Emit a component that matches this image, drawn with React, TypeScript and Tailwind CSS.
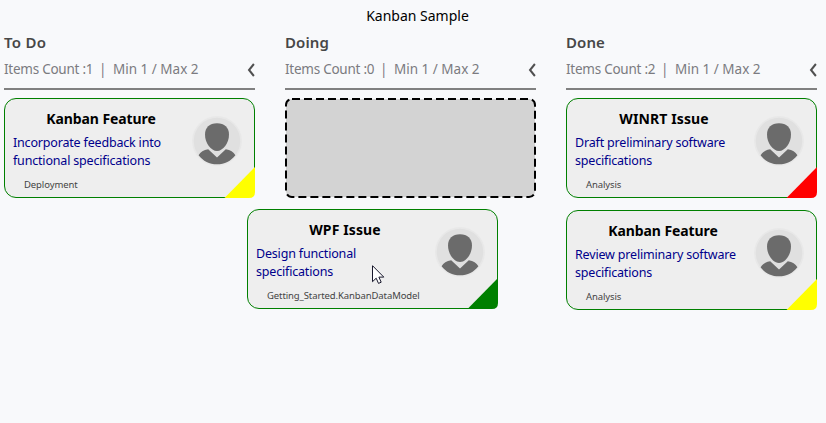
import React from "react";

type Task = {
  title: string;
  titleClass: string;
  lines: string[];
  tag: string;
  color: string;
};

type Column = { title: string; titleClass: string; count: number; tasks: Task[] };

const columns: Column[] = [
  {
    title: "To Do",
    titleClass: "tracking-[0.3px]",
    count: 1,
    tasks: [
      {
        title: "Kanban Feature",
        titleClass: "pl-[6px] tracking-[-0.08px]",
        lines: ["Incorporate feedback into", "functional specifications"],
        tag: "Deployment",
        color: "fill-[#ffff00]",
      },
    ],
  },
  { title: "Doing", titleClass: "tracking-[0.1px]", count: 0, tasks: [] },
  {
    title: "Done",
    titleClass: "tracking-[0.1px]",
    count: 2,
    tasks: [
      {
        title: "WINRT Issue",
        titleClass: "pl-[8px] tracking-[0.12px]",
        lines: ["Draft preliminary software", "specifications"],
        tag: "Analysis",
        color: "fill-[#ff0000]",
      },
      {
        title: "Kanban Feature",
        titleClass: "pl-[6px] tracking-[-0.08px]",
        lines: ["Review preliminary software", "specifications"],
        tag: "Analysis",
        color: "fill-[#ffff00]",
      },
    ],
  },
];

const dragged: Task = {
  title: "WPF Issue",
  titleClass: "pl-[8px] tracking-[0.12px]",
  lines: ["Design functional", "specifications"],
  tag: "Getting_Started.KanbanDataModel",
  color: "fill-[#008000]",
};

function Avatar() {
  return (
    <svg viewBox="0 0 50 50" className="size-[50px] shrink-0">
      <circle cx="25" cy="25" r="24.9" fill="#e8e8e8" />
      <circle cx="25" cy="25" r="23.2" fill="#e0e0e0" />
      <path
        d="M25 7.2C32.5 7.2 37 11.5 37 18.5C37 27 31 35 25 35C19 35 13 27 13 18.5C13 11.5 17.5 7.2 25 7.2Z"
        fill="#6b6b6b"
      />
      <path
        d="M16.2 33.2L25 41.5L33.8 33.2C38.5 34 41.5 36 43.4 39.2C39 45 32.5 48.3 25 48.3C17.5 48.3 11 45 6.6 39.2C8.5 36 11.5 34 16.2 33.2Z"
        fill="#6b6b6b"
      />
    </svg>
  );
}

function Card({ task }: { task: Task }) {
  return (
    <article className="relative flex h-[100px] w-[251px] shrink-0 rounded-[12px] border border-[#008000] bg-[#eeeeee]">
      <div className="flex w-[178px] flex-col pl-2 pt-[10px]">
        <h3 className={`h-[20px] whitespace-nowrap text-center text-[14px] leading-[20px] font-bold text-black ${task.titleClass}`}>
          {task.title}
        </h3>
        <div className="mt-[5px] h-[36px] text-[12.5px] leading-[18px] tracking-[-0.18px] whitespace-nowrap text-[#00008b]">
          {task.lines.map((line) => (
            <p key={line}>{line}</p>
          ))}
        </div>
        <p className="mt-[8px] pl-[11px] text-[9.5px] leading-[14px] tracking-[-0.1px] whitespace-nowrap text-[#444444]">
          {task.tag}
        </p>
      </div>
      <div className="ml-[9px] mt-[17px]">
        <Avatar />
      </div>
      <svg viewBox="0 0 31 31" className="absolute -right-px -bottom-px size-[31px]">
        <path d="M30.5 0.5L31 0V25Q31 31 25 31H0.5Z" className={task.color} />
      </svg>
    </article>
  );
}

function ColumnHeader({ column }: { column: Column }) {
  return (
    <header className="flex h-[59px] flex-col border-b-2 border-[#808080]">
      <h2 className={`h-[22px] text-[15px] leading-[22px] font-semibold text-[#474747] ${column.titleClass}`}>
        {column.title}
      </h2>
      <div className="mt-[6px] flex h-[20px] items-center text-[13.5px] leading-[20px] whitespace-nowrap text-[#7b7b80]">
        <span className="w-[95px] tracking-[-0.25px]">Items Count :{column.count}</span>
        <span className="w-[14px]">|</span>
        <span>Min 1 / Max 2</span>
        <svg viewBox="0 0 8 14" className="mt-[2px] ml-auto h-[14px] w-[8px]">
          <path d="M6.9 1L2 7L6.9 13" fill="none" stroke="#505050" strokeWidth="2" />
        </svg>
      </div>
    </header>
  );
}

function DropPlaceholder() {
  return (
    <svg viewBox="0 0 251 100" className="h-[100px] w-[251px]">
      <rect x="1" y="1" width="249" height="98" rx="6" fill="#d3d3d3" stroke="#000" strokeWidth="2" strokeDasharray="8 4" />
    </svg>
  );
}

export default function App() {
  return (
    <main className="relative h-[423px] w-[826px] overflow-hidden bg-[#f8f9fb] font-['Noto_Sans','Open_Sans',sans-serif]">
      <h1 className="h-[31px] pl-[9px] text-center text-[14px] leading-[31px] text-black">Kanban Sample</h1>
      <div className="flex gap-[30px] pl-1">
        {columns.map((column) => (
          <section key={column.title} className="w-[251px]">
            <ColumnHeader column={column} />
            <div className="mt-2 flex flex-col gap-3">
              {column.tasks.length === 0 && <DropPlaceholder />}
              {column.tasks.map((task, i) => (
                <Card key={i} task={task} />
              ))}
            </div>
          </section>
        ))}
      </div>
      <div className="absolute top-[209px] left-[247px]">
        <Card task={dragged} />
        <svg viewBox="0 0 13 20" className="absolute top-[56px] left-[125px] h-[20px] w-[13px]">
          <path
            d="M0.5 0.7V16.7L4.2 13.2L6.5 18.4L9.2 17.2L6.9 12.1H11.8Z"
            fill="#fff"
            stroke="#18182c"
            strokeWidth="1"
          />
        </svg>
      </div>
    </main>
  );
}
